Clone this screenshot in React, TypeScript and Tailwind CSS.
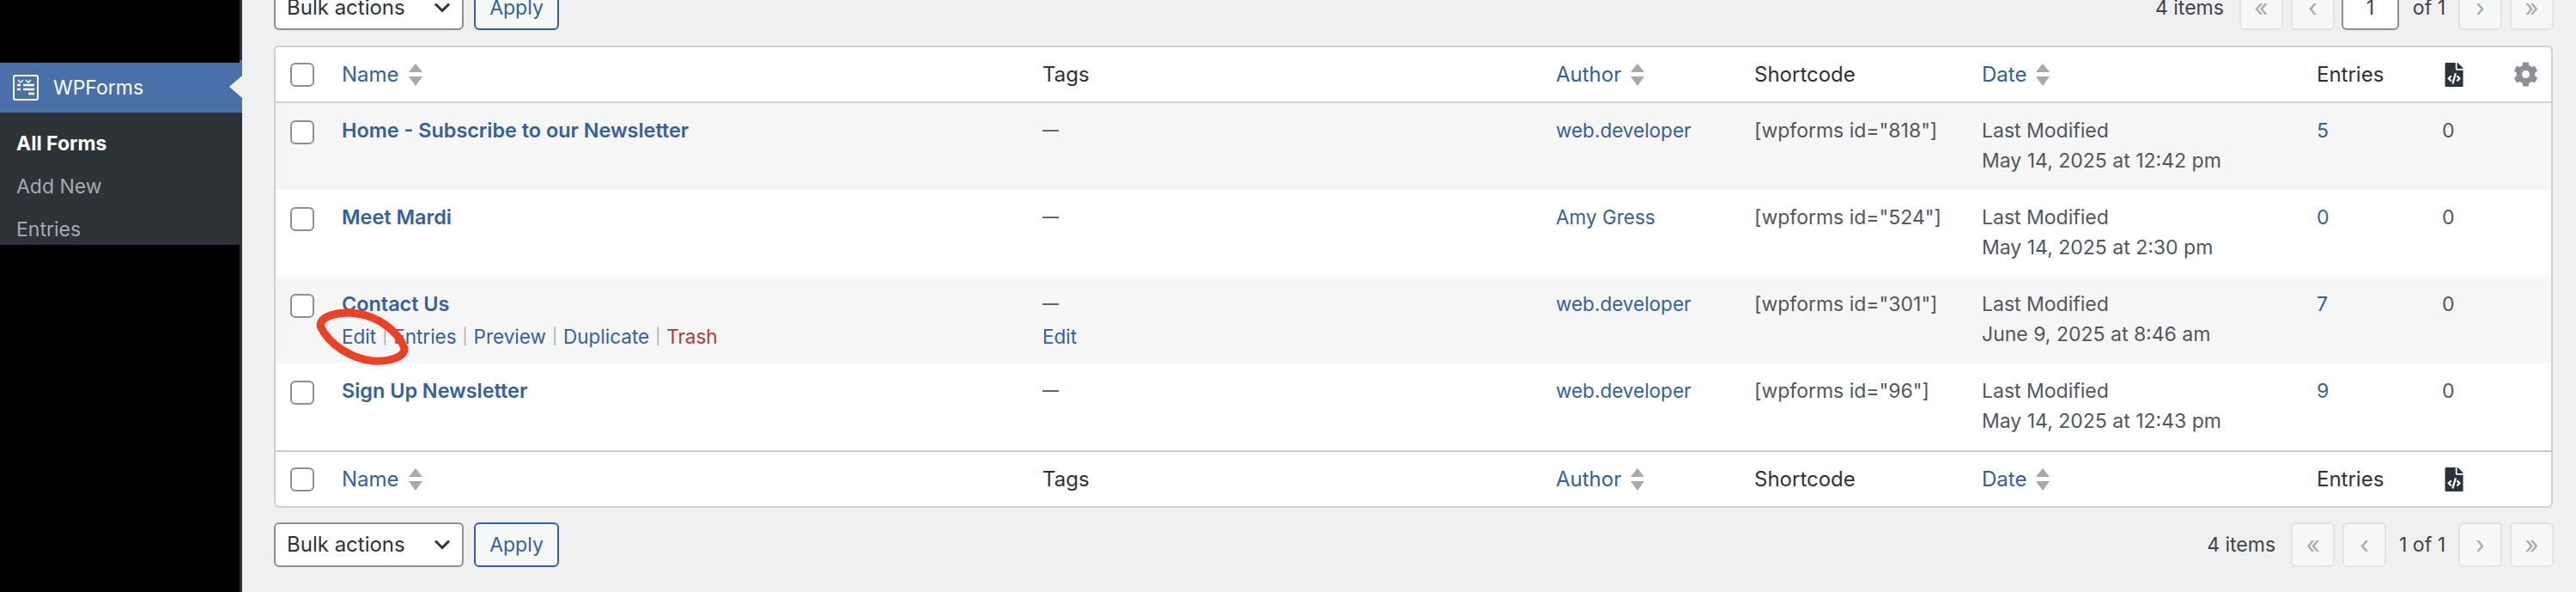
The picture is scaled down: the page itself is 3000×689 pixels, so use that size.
import { FaCog, FaFileCode } from 'react-icons/fa';

const cols = 'grid grid-cols-[77px_816px_598px_231px_265px_390px_146px_83px_45px]';

const forms = [
  { name: 'Home - Subscribe to our Newsletter', author: 'web.developer', id: '818', date: 'May 14, 2025 at 12:42 pm', entries: '5' },
  { name: 'Meet Mardi', author: 'Amy Gress', id: '524', date: 'May 14, 2025 at 2:30 pm', entries: '0' },
  { name: 'Contact Us', author: 'web.developer', id: '301', date: 'June 9, 2025 at 8:46 am', entries: '7', actions: true },
  { name: 'Sign Up Newsletter', author: 'web.developer', id: '96', date: 'May 14, 2025 at 12:43 pm', entries: '9' },
];

function Checkbox() {
  return <div className="w-[28px] h-[28px] ml-[17px] rounded-[6px] border-2 border-[#8c8f94] bg-white" />;
}

function SortArrows() {
  return (
    <svg width="16" height="26" viewBox="0 0 16 26" className="ml-[11px] shrink-0">
      <path d="M8 0l8 10H0zM0 15h16l-8 11z" fill="#a7aaad" />
    </svg>
  );
}

function SortHead({ label }: { label: string }) {
  return (
    <div className="flex items-center text-[#34619e]">
      {label}
      <SortArrows />
    </div>
  );
}

function HeadRow({ footer }: { footer?: boolean }) {
  return (
    <div className={`${cols} items-center text-[24px] text-[#2c3338] ${footer ? 'h-[65px] border-t-2 border-[#c8cacd]' : 'h-[65px] border-b-2 border-[#cfd1d4]'}`}>
      <Checkbox />
      <SortHead label="Name" />
      <div>Tags</div>
      <SortHead label="Author" />
      <div>Shortcode</div>
      <SortHead label="Date" />
      <div>Entries</div>
      <FaFileCode className="text-[28px] text-[#2c3338]" />
      {footer ? <div /> : <FaCog className="text-[29px] text-[#8c8f94]" />}
    </div>
  );
}

function Bulk() {
  return (
    <div className="flex gap-[12px] text-[24px]">
      <div className="w-[221px] h-[52px] flex items-center justify-between pl-[13px] pr-[13px] rounded-[6px] border-2 border-[#8c8f94] bg-white text-[#2c3338]">
        Bulk actions
        <svg width="20" height="12" viewBox="0 0 20 12" fill="none" stroke="#2c3338" strokeWidth="3">
          <path d="M2 1.5l8 8 8-8" />
        </svg>
      </div>
      <div className="w-[99px] h-[52px] flex items-center justify-center rounded-[6px] border-2 border-[#34619e] bg-[#f6f7f7] text-[#34619e] text-[23px]">
        Apply
      </div>
    </div>
  );
}

function PageBtn({ glyph }: { glyph: string }) {
  return (
    <div className="w-[51px] h-[52px] flex items-center justify-center rounded-[6px] border-2 border-[#e2e4e7] bg-[#f6f7f7] text-[#a7aaad] text-[28px]">
      {glyph}
    </div>
  );
}

function Pager({ top }: { top?: boolean }) {
  return (
    <div className="flex items-center text-[#3c434a]">
      <span className="mr-[18px]">4 items</span>
      <div className="flex gap-[9px]">
        <PageBtn glyph="«" />
        <PageBtn glyph="‹" />
      </div>
      {top ? (
        <div className="flex items-center">
          <div className="w-[67px] h-[52px] ml-[8px] flex items-center justify-center rounded-[6px] border-2 border-[#8c8f94] bg-white">1</div>
          <span className="ml-[16px] mr-[15px]">of 1</span>
        </div>
      ) : (
        <span className="ml-[15px] mr-[15px]">1 of 1</span>
      )}
      <div className="flex gap-[9px]">
        <PageBtn glyph="›" />
        <PageBtn glyph="»" />
      </div>
    </div>
  );
}

function Sep() {
  return <span className="text-[18px] text-[#a7aaad]">|</span>;
}

function Actions() {
  return (
    <div className="flex items-center gap-[7px] text-[22.5px] text-[#34619e] whitespace-nowrap">
      <span>Edit</span>
      <Sep />
      <span>Entries</span>
      <Sep />
      <span>Preview</span>
      <Sep />
      <span>Duplicate</span>
      <Sep />
      <span className="text-[#b0393a]">Trash</span>
    </div>
  );
}

export default function App() {
  return (
    <div className="flex h-[689px] w-[3000px] overflow-hidden bg-[#f0f0f1] text-[23px] font-['Inter',sans-serif]">
      <aside className="w-[282px] shrink-0 flex flex-col bg-[#2e3338]">
        <div className="h-[73px] w-[279px] bg-black" />
        <div className="relative h-[58px] flex items-center bg-[#4a70a9] text-white">
          <div className="absolute right-0 -top-[3px] w-[3px] h-[3px] bg-[#4a70a9]" />
          <svg width="30" height="30" viewBox="0 0 30 30" fill="none" stroke="white" className="ml-[15px] mr-[17px]">
            <rect x="1" y="1" width="28" height="28" rx="2" strokeWidth="2" />
            <path d="M6 6l3 3 3-3M15 6l3 3 3-3" strokeWidth="1.5" />
            <path d="M5 12h4M12 12h13M5 17h4M12 17h13M18 22h7" strokeWidth="2.5" />
          </svg>
          WPForms
          <svg width="15" height="26" viewBox="0 0 15 26" className="absolute right-0 top-[15px]">
            <path d="M15 0L0 13l15 13z" fill="#f0f0f1" />
          </svg>
        </div>
        <div className="h-[154px] pt-[11px] px-[19px] leading-[50px] overflow-hidden text-[#a7aaad]">
          <div className="font-bold text-white">All Forms</div>
          <div>Add New</div>
          <div>Entries</div>
        </div>
        <div className="flex-1 w-[279px] bg-black" />
      </aside>

      <main className="w-[2692px] ml-[37px] -mt-[17px]">
        <div className="flex justify-between h-[52px] w-[2655px]">
          <Bulk />
          <Pager top />
        </div>

        <div className="relative w-[2654px] mt-[18px] rounded-[6px] border-2 border-[#cfd1d4] bg-white">
          <HeadRow />
          {forms.map((f, i) => (
            <div
              key={f.id}
              className={`${cols} h-[101px] pt-[15px] leading-[34.5px] text-[#50575e] ${i % 2 === 0 ? 'bg-[#f6f6f6]' : 'bg-white'}`}
            >
              <div className="pt-[5px]">
                <Checkbox />
              </div>
              <div>
                <div className="font-semibold text-[23.4px] text-[#34619e]">{f.name}</div>
                {f.actions && <div className="mt-[3px]"><Actions /></div>}
              </div>
              <div>
                <div className="text-[19px] font-medium">—</div>
                {f.actions && <div className="mt-[3px] text-[22.5px] text-[#34619e]">Edit</div>}
              </div>
              <div className="text-[22.5px] text-[#34619e]">{f.author}</div>
              <div>[wpforms id="{f.id}"]</div>
              <div>
                Last Modified
                <br />
                {f.date}
              </div>
              <div className="text-[#34619e]">{f.entries}</div>
              <div>0</div>
              <div />
            </div>
          ))}
          <HeadRow footer />
          <svg width="150" height="100" viewBox="0 0 450 300" fill="none" className="absolute left-[19px] top-[275px]">
            <path
              d="M100 150C95 115 160 95 230 105C300 115 370 165 393 225C395 260 330 275 280 270C210 262 130 215 100 150Z"
              stroke="#ee4123"
              strokeWidth="27"
            />
          </svg>
        </div>

        <div className="flex justify-between h-[52px] w-[2655px] mt-[17px]">
          <Bulk />
          <Pager />
        </div>
      </main>
    </div>
  );
}
